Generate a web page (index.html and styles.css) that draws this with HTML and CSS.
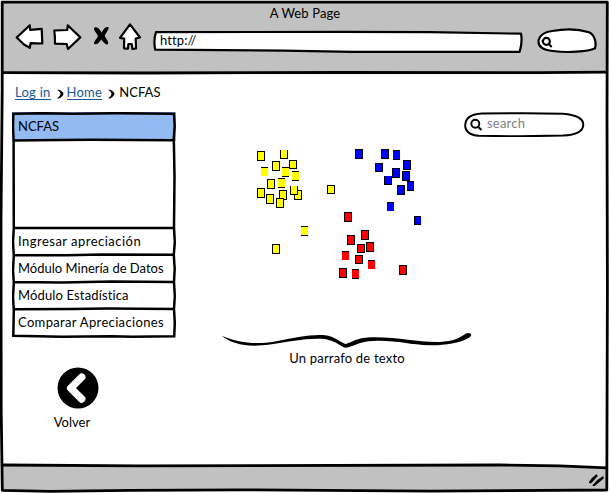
FILE: index.html
```html
<!DOCTYPE html>
<html lang="es">
<head>
<meta charset="utf-8">
<title>A Web Page</title>
<link rel="stylesheet" href="styles.css">
</head>
<body>
<div class="window">
  <svg class="outline" viewBox="0 0 610 493" aria-hidden="true">
    <path class="gray" d="M3 3H607V72H3zM3 465L500 465 607 468V490H3z"/>
    <path class="line" d="M3 72.6L145 73 340 72.5 540 72.6 607 72.2M3 465L140 465.8 500 465 560 465.8 607 467.8"/>
    <path class="line frame" d="M2.2 2.2H607.3L607 120 607.4 290 606.8 490 430 491.2 240 489.8 130 490.3 50 491.3 2.3 490.3 1.2 410 1 220 2.2 90z"/>
  </svg>
  <header class="chrome">
    <h1 class="title">A Web Page</h1>
    <div class="toolbar">
      <svg class="nav" width="130" height="34" viewBox="14 20 130 34" aria-hidden="true">
        <path class="arrow" d="M16.7 37.5L29.8 25.3 30.2 29.8 41.7 28.8 42.3 43.5 30.6 43.2 29.8 47.8 24 44.5z"/>
        <path class="arrow" d="M54.3 30.5L67.3 30 67.7 25.3 80.3 37.4 68 49 66.7 44 55 43.7 54.9 37z"/>
        <path class="cross" d="M94.6 27.4C98 26 100.5 30.5 101.7 32.5 103 29.5 106 25.8 108.4 27.2 109.5 28.5 106.2 32.5 104.7 35.8 106 39 109.8 42.6 107.7 44.2 105.5 45.5 103 41.3 101.2 39.6 99.7 42 97 45.5 94.4 44 92.6 42.4 97.4 38.5 98 36 96.8 33 92.5 29.2 94.6 27.4z"/>
        <path class="arrow" d="M130 24.3L140 37.5 135.7 38.5 136 48.5 132.4 48.8 131.8 44 128.4 44 128 48.7 124 48.3 124.2 38.6 120 37.8z"/>
      </svg>
      <div class="address">
        <svg class="shape" viewBox="0 0 370 24" aria-hidden="true"><path class="box" d="M3 2.2L190 1.8 277 2.2 368 3.7Q369.6 12 366.7 21.8L200 21.8 130 20.6 2.2 19.7Q.3 10 3 2.2z"/></svg>
        <span class="url">http://</span>
      </div>
      <div class="lookup">
        <svg class="shape" viewBox="0 0 61 26" aria-hidden="true"><path class="box" d="M15 3C29 .6 42 1.2 52 4.2 58 7 59.5 15 58 20.2 51 23.8 30 25 16 23 5 22.2.8 18 1.6 12 3 6.4 8 4 15 3z"/><circle class="lens" cx="9.4" cy="13.4" r="3.5"/><path class="lens" d="M5.5 13H6M12.2 16.5L14.2 18.4"/></svg>
      </div>
    </div>
  </header>
  <main class="page">
    <nav class="crumbs">
      <a href="#">Log in</a>
      <svg class="sep" viewBox="0 0 7 10" aria-hidden="true"><path d="M.5.4Q5.5 1.2 6.6 4.8 5.5 8.3 1 9.8L.3 9.2Q3.5 7 3.6 4.8 3.2 2.6.5 1z"/></svg>
      <a href="#">Home</a>
      <svg class="sep" viewBox="0 0 7 10" aria-hidden="true"><path d="M.5.4Q5.5 1.2 6.6 4.8 5.5 8.3 1 9.8L.3 9.2Q3.5 7 3.6 4.8 3.2 2.6.5 1z"/></svg>
      <span class="here">NCFAS</span>
    </nav>
    <div class="columns">
      <aside class="side">
        <div class="menu">
          <div class="item current"><span>NCFAS</span></div>
          <div class="panel"></div>
          <div class="item"><span class="wide">Ingresar apreciación</span></div>
          <div class="item"><span>Módulo Minería de Datos</span></div>
          <div class="item"><span class="loose">Módulo Estadística</span></div>
          <div class="item"><span class="open">Comparar Apreciaciones</span></div>
          <svg class="rough" viewBox="0 0 164 226" aria-hidden="true"><path d="M1.3 1.8L30 1.2 60 1.7 105 1.2 162 1.8 162.7 14 161.8 26 162.5 65 162 116 162.8 130 161.8 143 162.7 157 162 170 162.8 184 162 197 162.8 211 162.2 224.3 120 224.7 100 224.2 50 224.7 1.3 223.8 1.8 198 1 185 1.8 171 1 158 1.8 144 1 130 1.8 116 1.6 28 1 15zM1.5 28.6L48 28 80 27.8 162 28.3M1.5 115.7L40 116.1 162 115.7M1.5 143L55 143.3 90 142.4 162 142.8M1.5 170L50 170.4 100 169.6 162 170M1.5 197.2L60 197.1 95 196.6 162 197"/></svg>
        </div>
        <div class="back">
          <svg width="42" height="42" viewBox="0 0 42 42" aria-hidden="true"><circle cx="21" cy="21" r="20.5"/><path class="chevron" d="M24.7 10.2L13.7 21.1 24.7 32"/></svg>
          <span>Volver</span>
        </div>
      </aside>
      <section class="content">
        <div class="search">
          <svg class="shape" viewBox="0 0 121 25" aria-hidden="true"><path class="pill" d="M18 1.5L60 1.2 99 1.7C115 3 119.5 8 119.3 13 119 20 111 23 99 23.6L55 24.3 15 23.8C5 23 1.2 19 1.2 13.2 1.5 6 8 2 18 1.5z"/><circle class="glass" cx="11.3" cy="11.8" r="4"/><path class="glass" d="M14.3 15L17.5 18"/></svg>
          <span>search</span>
        </div>
        <svg class="plot" width="166" height="132" viewBox="255 148 166 132" shape-rendering="crispEdges" role="img" aria-label="Clusters">
          <defs>
            <g id="a"><path d="M0 0H8V10H0z" fill="#000"/><path d="M1 1H7V9H1z"/></g>
            <g id="b"><path d="M0 0H8V9H0z" fill="#000"/><path d="M1 1H7V8H1z"/></g>
            <g id="c"><path d="M0 0H7V10H0z" fill="#000"/><path d="M0 1H7V9H0z"/></g>
            <g id="d"><path d="M0 0H7V9H0z" fill="#000"/><path d="M0 1H7V9H0z"/></g>
            <g id="e"><path d="M0 0H8V9H0z" fill="#000"/><path d="M1 0H7V8H1z"/></g>
          </defs>
          <g fill="#ff0">
            <use href="#a" x="257" y="151"/><use href="#e" x="280" y="150"/><use href="#a" x="272" y="161"/><use href="#b" x="289" y="160"/>
            <use href="#d" x="261" y="167"/><use href="#c" x="282" y="167"/><use href="#c" x="292" y="171"/><use href="#a" x="267" y="179"/>
            <use href="#c" x="278" y="178"/><use href="#a" x="257" y="188"/><use href="#a" x="279" y="190"/><use href="#a" x="294" y="190"/>
            <use href="#e" x="290" y="186"/><use href="#a" x="266" y="194"/><use href="#a" x="276" y="198"/><use href="#b" x="327" y="185"/>
            <use href="#c" x="301" y="226"/><use href="#a" x="272" y="244"/>
          </g>
          <g fill="#00f">
            <use href="#a" x="355" y="149"/><use href="#a" x="381" y="149"/><use href="#c" x="393" y="150"/><use href="#a" x="403" y="160"/>
            <use href="#b" x="375" y="163"/><use href="#a" x="392" y="168"/><use href="#a" x="402" y="171"/><use href="#e" x="384" y="176"/>
            <use href="#c" x="407" y="181"/><use href="#a" x="397" y="185"/><use href="#d" x="387" y="202"/><use href="#b" x="414" y="216"/>
          </g>
          <g fill="red">
            <use href="#a" x="344" y="212"/><use href="#a" x="361" y="230"/><use href="#a" x="347" y="235"/><use href="#a" x="366" y="242"/>
            <use href="#b" x="357" y="244"/><use href="#d" x="342" y="251"/><use href="#b" x="355" y="255"/><use href="#d" x="368" y="260"/>
            <use href="#a" x="339" y="268"/><use href="#c" x="352" y="269"/><use href="#a" x="399" y="265"/>
          </g>
        </svg>
        <svg class="brace" width="252" height="18" viewBox="220 331 252 18" aria-hidden="true"><path d="M221.8 335.8C240 343.5 256 344.5 275 341.5 295 338 308 334.3 325 335.2 334 336 341 343 346 344 352 342 357 338 370 337.3 400 336.6 418 342.8 440 342 453 341.2 460 338 466 333.5 471 331.5 472.8 335 469.5 337.5 459 343.8 444 345.4 430 345.2 408 345 396 339.8 373 341 360 341.5 355 345.8 346 347.8 340 346.8 337 340.5 322 338.8 305 338 290 341.5 270 344.5 248 347.5 232 344.5 221.8 335.8z"/></svg>
        <p class="caption">Un parrafo de texto</p>
      </section>
    </div>
  </main>
  <footer class="status">
    <svg width="18" height="15" viewBox="587 472 18 15" aria-hidden="true"><path d="M589.8 482.3Q592 478.5 596.5 475.3M590.8 482.5L596.8 476M593.5 485.2Q597 480.5 602.8 477.2M594.5 485.2L602.8 478"/></svg>
  </footer>
</div>
</body>
</html>
```
FILE: styles.css
```css
* { box-sizing: border-box; }
body { margin: 0; background: #fff; color: #000; font: 13px/16px Lato, "Open Sans", sans-serif; font-variant-ligatures: none; }
span { white-space: nowrap; }
.window { position: relative; width: 610px; height: 493px; display: flex; flex-direction: column; overflow: hidden; }
.outline { position: absolute; inset: 0; width: 610px; height: 493px; z-index: -1; }
.gray { fill: #c1c1c1; }
.line { fill: none; stroke: #000; stroke-width: 2.8; stroke-linejoin: round; }
.chrome { height: 74px; padding-top: 5px; }
.title { margin: 0; font-size: 13px; font-weight: 400; line-height: 16px; text-align: center; letter-spacing: .12px; }
.toolbar { display: flex; align-items: flex-start; padding-left: 14px; }
.nav { margin-top: -1px; }
.arrow { fill: #fff; stroke: #000; stroke-width: 2.2; stroke-linejoin: round; }
.address { position: relative; width: 370px; height: 24px; margin: 9px 0 0 9px; padding: 2px 0 0 7px; }
.shape { position: absolute; inset: 0; width: 100%; height: 100%; }
.box { fill: #fff; stroke: #000; stroke-width: 2.2; stroke-linejoin: round; }
.url { position: relative; letter-spacing: .1px; }
.lookup { position: relative; width: 61px; height: 26px; margin: 7px 0 0 14px; }
.lens { fill: none; stroke: #000; stroke-width: 2.1; stroke-linecap: round; }
.page { flex: 1; }
.crumbs { display: flex; align-items: flex-start; padding: 10px 0 0 15px; height: 29px; margin-bottom: 9px; }
.crumbs a { color: #1b5795; text-decoration: none; border-bottom: 1px solid #1b5795; height: 16px; letter-spacing: .25px; }
.here { margin-left: 1px; letter-spacing: .05px; }
.sep { width: 7px; height: 10px; margin: 5px 3px 0 6px; }
.columns { display: flex; }
.side { flex: none; width: 164px; margin-left: 12px; }
.menu { position: relative; height: 226px; }
.rough { position: absolute; inset: 0; width: 164px; height: 226px; fill: none; stroke: #000; stroke-width: 2.5; }
.item { height: 27px; padding: 5px 0 0 6px; }
.current { height: 29px; background: #94baf2; padding-top: 6px; }
.panel { height: 87px; }
.wide { letter-spacing: .48px; }
.loose { letter-spacing: .14px; }
.open { letter-spacing: .34px; }
.back { display: flex; flex-direction: column; align-items: center; width: 84px; margin: 29px 0 0 24px; }
.back span { margin: 5px 12px 0 0; }
.chevron { fill: none; stroke: #fff; stroke-width: 7.4; stroke-linecap: round; stroke-linejoin: round; }
.content { display: flex; flex-direction: column; width: 400px; margin-left: 44px; }
.search { position: relative; width: 121px; height: 25px; margin-left: 244px; padding: 3px 0 0 23px; color: #808088; }
.pill { fill: #fff; stroke: #000; stroke-width: 2; }
.glass { fill: none; stroke: #000; stroke-width: 1.9; }
.search span { position: relative; letter-spacing: .2px; }
.plot { margin: 11px 0 0 35px; }
.brace { margin-top: 51px; }
.caption { width: 254px; margin: 1px 0 0; text-align: center; letter-spacing: .2px; }
.status { display: flex; justify-content: flex-end; height: 29px; padding: 8px 5px 0 0; }
.status path { fill: none; stroke: #000; stroke-width: 1.7; stroke-linecap: round; }
```
